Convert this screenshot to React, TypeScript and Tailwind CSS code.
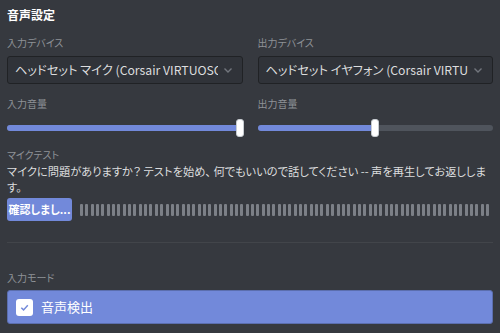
import React from 'react';

const font = { fontFamily: '"Noto Sans CJK JP", "Noto Sans", sans-serif' };

function Chevron() {
  return (
    <svg width="10" height="10" viewBox="0 0 10 10" className="shrink-0">
      <path d="M1.5 3.5 L5 7 L8.5 3.5" fill="none" stroke="#72767d" strokeWidth="1.4" />
    </svg>
  );
}

function DeviceSelect({ label, value }: { label: string; value: string }) {
  return (
    <div>
      <div className="text-[10px] leading-[14px] text-[#8e9297] mb-[6px] [font-feature-settings:'palt']">{label}</div>
      <div className="h-[28px] flex items-center gap-[5px] bg-[#303339] border border-[#202225] rounded-[3px] pl-[7px] pr-[9px]">
        <div className="flex-1 overflow-hidden whitespace-nowrap text-[12.25px] text-[#dcddde] [font-feature-settings:'palt']">{value}</div>
        <Chevron />
      </div>
    </div>
  );
}

function Slider({ label, pct }: { label: string; pct: number }) {
  return (
    <div>
      <div className="text-[10px] leading-[14px] text-[#8e9297] [font-feature-settings:'palt']">{label}</div>
      <div className="relative h-[18px] mt-[8px] flex items-center">
        <div className="w-full h-[6px] rounded-full bg-[#4f545c] overflow-hidden">
          <div className="h-full bg-[#7289da]" style={{ width: `${pct}%` }} />
        </div>
        <div
          className="absolute top-0 w-[8px] h-[18px] bg-white rounded-[3px] border border-[#c7ccd1]"
          style={{ left: `calc(${pct}% - 4px)` }}
        />
      </div>
    </div>
  );
}

export default function App() {
  const bars = Array.from({ length: 77 });

  return (
    <main className="w-[500px] h-[333px] overflow-hidden bg-[#36393f] px-[7px] pt-[7px]" style={font}>
      <h1 className="text-[12px] leading-[16px] font-bold text-white">音声設定</h1>

      <div className="grid grid-cols-2 gap-x-[15px] mt-[13px]">
        <DeviceSelect label="入力デバイス" value="ヘッドセット マイク (Corsair VIRTUOSO SE Wireless Gaming Headset)" />
        <DeviceSelect label="出力デバイス" value="ヘッドセット イヤフォン (Corsair VIRTUOSO SE Wireless Gaming Headset)" />
      </div>

      <div className="grid grid-cols-2 gap-x-[15px] mt-[13px]">
        <Slider label="入力音量" pct={99} />
        <Slider label="出力音量" pct={50} />
      </div>

      <div className="mt-[11px]">
        <div className="text-[10px] leading-[14px] text-[#8e9297] [font-feature-settings:'palt']">マイクテスト</div>
        <p className="text-[11.25px] leading-[16px] text-[#dcddde] mt-[1px] whitespace-nowrap [font-feature-settings:'palt']">
          マイクに問題がありますか？ テストを始め、 何でもいいので話してください -- 声を再生してお返ししま
          <br />
          す。
        </p>
        <div className="flex items-center gap-[8px] mt-[3px]">
          <button className="h-[23px] w-[65px] shrink-0 bg-[#7289da] rounded-[3px] text-white text-[11px] font-bold [font-feature-settings:'palt']">
            確認しまし...
          </button>
          <div className="flex-1 flex justify-between h-[12px] pr-[3px]">
            {bars.map((_, i) => (
              <div key={i} className="w-[3px] h-full rounded-[1px] bg-[#7c8087]" />
            ))}
          </div>
        </div>
      </div>

      <div className="h-px bg-[#42454a] mt-[21px]" />

      <div className="mt-[28px]">
        <div className="text-[10px] leading-[14px] text-[#8e9297] [font-feature-settings:'palt']">入力モード</div>
        <div className="mt-[5px] h-[34px] flex items-center gap-[8px] bg-[#7289da] border border-[#5b6eae] rounded-[3px] px-[8px]">
          <div className="w-[17px] h-[17px] bg-white rounded-[3px] flex items-center justify-center">
            <svg width="11" height="11" viewBox="0 0 12 12">
              <path d="M2.5 6.2 L5 8.6 L9.6 3.6" fill="none" stroke="#7289da" strokeWidth="1.6" />
            </svg>
          </div>
          <span className="text-[13px] text-white">音声検出</span>
        </div>
      </div>
    </main>
  );
}
